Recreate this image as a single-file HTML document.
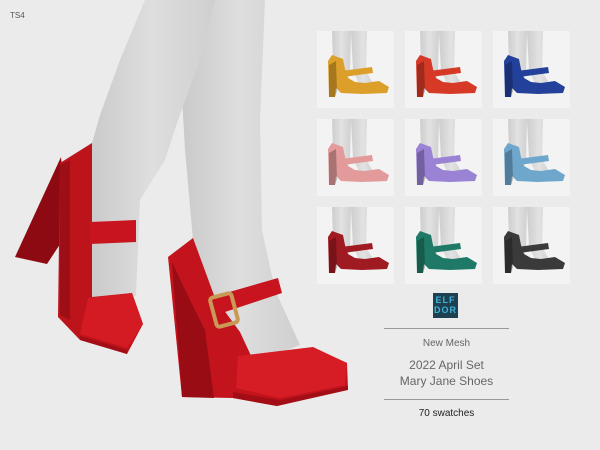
<!DOCTYPE html>
<html><head><style>
body{margin:0;width:600px;height:450px;overflow:hidden;background:#ebebeb;font-family:"Liberation Sans",sans-serif}
</style></head><body>
<svg width="600" height="450" style="position:absolute;left:0;top:0">
<defs>
<linearGradient id="lg" x1="0" x2="1"><stop offset="0" stop-color="#c9c9c9"/><stop offset=".5" stop-color="#dedede"/><stop offset="1" stop-color="#cfcfcf"/></linearGradient>
<linearGradient id="ml" x1="0" x2="1"><stop offset="0" stop-color="#cdcdcd"/><stop offset=".5" stop-color="#e2e2e2"/><stop offset="1" stop-color="#d0d0d0"/></linearGradient>
<g id="leg"><path d="M15 0 L34 0 L33 40 L30 52 L22 50 L16 30 Z" fill="url(#ml)"/><path d="M34 0 L50 0 L49 40 L58 56 L44 56 L36 40 Z" fill="url(#ml)"/></g>
<g id="sh">
<path d="M15 24 L11 30 L12 66 L18 66 L19 57 L24 62 L45 63 L70 62 L72 56 L62 50 L48 52 L38 51 L31 47 L28 38 L26 28 Z"/>
<path d="M24 40 L55 36 L56 42 L26 46 Z"/>
<path d="M12 34 L19 30 L20 60 L18 66 L12 66 Z" opacity=".25" fill="#000"/>
</g>
</defs>
<rect width="600" height="450" fill="#ebebeb"/>
<path d="M200 0 L265 0 L260 120 L262 230 L275 290 L300 345 L255 362 L215 300 L193 240 L185 150 L180 60 Z" fill="url(#lg)"/>
<path d="M145 0 L215 0 L200 60 L178 120 L165 160 L140 200 L136 296 L88 298 L92 143 L100 115 L120 60 Z" fill="url(#lg)"/>
<path d="M61 157 L15 257 L47 264 L68 232 Z" fill="#8e0a12"/>
<path d="M92 143 L60 163 L58 317 L80 340 L127 354 L143 324 L132 293 L92 297 Z" fill="#bd131b"/>
<path d="M60 165 L70 160 L70 320 L60 315 Z" fill="#9e0e16"/>
<path d="M88 298 L132 293 L143 324 L127 348 L80 334 Z" fill="#d41a22"/>
<path d="M80 336 L127 350 L127 354 L80 340 Z" fill="#a30e16"/>
<path d="M90 222 L136 220 L136 242 L90 244 Z" fill="#c8141e"/>
<path d="M193 238 L168 257 L182 397 L233 398 L277 406 L348 389 L347 363 L313 348 L253 360 L240 332 L215 298 Z" fill="#c3141d"/>
<path d="M172 262 L182 397 L214 398 L205 330 L190 300 Z" fill="#9a0c14"/>
<path d="M238 356 L313 347 L347 363 L345 385 L280 398 L236 388 Z" fill="#d61c24"/>
<path d="M233 392 L280 400 L348 386 L348 390 L277 406 L233 398 Z" fill="#a30e16"/>
<path d="M212 297 L278 278 L282 293 L216 315 Z" fill="#c8141e"/>
<rect x="213" y="295" width="22" height="30" rx="3" fill="none" stroke="#c99a55" stroke-width="4" transform="rotate(-15 224 310)"/>
<g transform="translate(317,31)"><rect width="77" height="77" fill="#f3f3f3"/><use href="#leg"/><g fill="#dca02a"><use href="#sh"/></g></g>
<g transform="translate(405,31)"><rect width="77" height="77" fill="#f3f3f3"/><use href="#leg"/><g fill="#d63a26"><use href="#sh"/></g></g>
<g transform="translate(493,31)"><rect width="77" height="77" fill="#f3f3f3"/><use href="#leg"/><g fill="#23409a"><use href="#sh"/></g></g>
<g transform="translate(317,119)"><rect width="77" height="77" fill="#f3f3f3"/><use href="#leg"/><g fill="#e39a9a"><use href="#sh"/></g></g>
<g transform="translate(405,119)"><rect width="77" height="77" fill="#f3f3f3"/><use href="#leg"/><g fill="#9a82d4"><use href="#sh"/></g></g>
<g transform="translate(493,119)"><rect width="77" height="77" fill="#f3f3f3"/><use href="#leg"/><g fill="#6ea6cc"><use href="#sh"/></g></g>
<g transform="translate(317,207)"><rect width="77" height="77" fill="#f3f3f3"/><use href="#leg"/><g fill="#a01a22"><use href="#sh"/></g></g>
<g transform="translate(405,207)"><rect width="77" height="77" fill="#f3f3f3"/><use href="#leg"/><g fill="#1e7a66"><use href="#sh"/></g></g>
<g transform="translate(493,207)"><rect width="77" height="77" fill="#f3f3f3"/><use href="#leg"/><g fill="#3a3a3a"><use href="#sh"/></g></g>
</svg>
<div style="position:absolute;left:10px;top:11px;font-size:8px;color:#555">TS4</div>
<div style="position:absolute;left:433px;top:293px;width:25px;height:25px;background:#1d4150;color:#3fb0d8;font-size:9px;font-weight:bold;line-height:10px;text-align:center;padding-top:2px;box-sizing:border-box;letter-spacing:1px">ELF<br>DOR</div>
<div style="position:absolute;left:384px;top:328px;width:125px;height:1px;background:#999"></div>
<div style="position:absolute;left:384px;top:338px;width:125px;text-align:center;color:#666;font-size:10px">New Mesh</div>
<div style="position:absolute;left:384px;top:357px;width:125px;text-align:center;color:#666;font-size:12px;line-height:16px">2022 April Set<br>Mary Jane Shoes</div>
<div style="position:absolute;left:384px;top:399px;width:125px;height:1px;background:#999"></div>
<div style="position:absolute;left:384px;top:408px;width:125px;text-align:center;color:#222;font-size:10px">70 swatches</div>
</body></html>
